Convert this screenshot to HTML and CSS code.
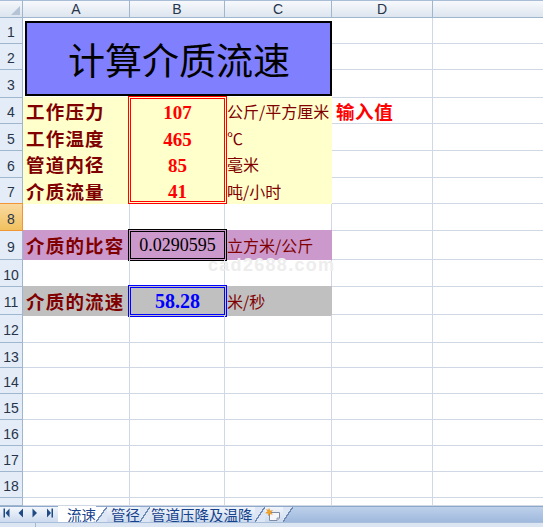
FILE: index.html
```html
<!DOCTYPE html>
<html lang="zh-CN">
<head>
<meta charset="utf-8">
<title>计算介质流速</title>
<link rel="stylesheet" href="styles.css">
</head>
<body>
<div class="app">
  <div class="sheet">
    <div class="corner"><svg width="9" height="9" viewBox="0 0 9 9"><polygon points="9,0 9,9 0,9" fill="#B4C3D6"/></svg></div>
    <div class="ch">A</div><div class="ch">B</div><div class="ch">C</div><div class="ch">D</div><div class="ch e"></div>

    <div class="rh">1</div>
    <div class="title">计算介质流速</div>
    <div class="c"></div><div class="c e"></div>
    <div class="rh">2</div><div class="c"></div><div class="c e"></div>
    <div class="rh">3</div><div class="c"></div><div class="c e"></div>

    <div class="rh">4</div>
    <div class="inputs">
      <div class="lbl">工作压力</div>
      <div class="ibox">
        <span class="iv">107</span>
        <span class="iv">465</span>
        <span class="iv">85</span>
        <span class="iv">41</span>
      </div>
      <div class="unit">公斤/平方厘米</div>
      <div class="lbl">工作温度</div>
      <div class="unit">℃</div>
      <div class="lbl">管道内径</div>
      <div class="unit">毫米</div>
      <div class="lbl">介质流量</div>
      <div class="unit">吨/小时</div>
    </div>
    <div class="c note">输入值</div><div class="c e"></div>
    <div class="rh">5</div><div class="c"></div><div class="c e"></div>
    <div class="rh">6</div><div class="c"></div><div class="c e"></div>
    <div class="rh">7</div><div class="c"></div><div class="c e"></div>

    <div class="rh sel">8</div><div class="c"></div><div class="c"></div><div class="c"></div><div class="c"></div><div class="c e"></div>

    <div class="rh">9</div>
    <div class="band band-vol">
      <div class="lbl">介质的比容</div>
      <div class="obox obox-black">0.0290595</div>
      <div class="unit">立方米/公斤</div>
    </div>
    <div class="c"></div><div class="c e"></div>

    <div class="rh">10</div><div class="c"></div><div class="c"></div><div class="c"></div><div class="c"></div><div class="c e"></div>

    <div class="rh">11</div>
    <div class="band band-speed">
      <div class="lbl">介质的流速</div>
      <div class="obox obox-blue">58.28</div>
      <div class="unit">米/秒</div>
    </div>
    <div class="c"></div><div class="c e"></div>

    <div class="rh">12</div><div class="c"></div><div class="c"></div><div class="c"></div><div class="c"></div><div class="c e"></div>
    <div class="rh">13</div><div class="c"></div><div class="c"></div><div class="c"></div><div class="c"></div><div class="c e"></div>
    <div class="rh">14</div><div class="c"></div><div class="c"></div><div class="c"></div><div class="c"></div><div class="c e"></div>
    <div class="rh">15</div><div class="c"></div><div class="c"></div><div class="c"></div><div class="c"></div><div class="c e"></div>
    <div class="rh">16</div><div class="c"></div><div class="c"></div><div class="c"></div><div class="c"></div><div class="c e"></div>
    <div class="rh">17</div><div class="c"></div><div class="c"></div><div class="c"></div><div class="c"></div><div class="c e"></div>
    <div class="rh">18</div><div class="c"></div><div class="c"></div><div class="c"></div><div class="c"></div><div class="c e"></div>
    <div class="rh"></div><div class="c"></div><div class="c"></div><div class="c"></div><div class="c"></div><div class="c e"></div>

    <div class="watermark">cad2688.com</div>
  </div>

  <div class="tabbar">
    <div class="nav">
      <svg width="58" height="16" viewBox="0 0 58 16">
        <rect x="3.5" y="2.5" width="1.5" height="9" fill="#1F4A86"/>
        <polygon points="5.5,7 9.5,2.5 9.5,11.5" fill="#1F4A86"/>
        <polygon points="18.5,7 23,2.5 23,11.5" fill="#1F4A86"/>
        <polygon points="37,7 32.5,2.5 32.5,11.5" fill="#1F4A86"/>
        <polygon points="51,7 47,2.5 47,11.5" fill="#1F4A86"/>
        <rect x="51.5" y="2.5" width="1.5" height="9" fill="#1F4A86"/>
      </svg>
    </div>
    <div class="tab tab-active">流速</div>
    <div class="sep sep-aw"></div>
    <div class="tab tab-2">管径</div>
    <div class="sep sep-ww"></div>
    <div class="tab tab-3">管道压降及温降</div>
    <div class="sep sep-ww"></div>
    <div class="tab tab-new">
      <svg width="17" height="14" viewBox="0 0 17 14">
        <path d="M4.5 4.5 H14.5 V10 L12 12.5 H4.5 Z" fill="#F4F6F9" stroke="#7D8CA3" stroke-width="1"/>
        <path d="M12 12.5 V10 H14.5" fill="#D5DBE4" stroke="#7D8CA3" stroke-width="0.8"/>
        <polygon points="4,0.5 5,3 7.5,2.5 5.8,4.3 7.3,6.5 4.8,5.6 3.5,7.8 3.2,5.3 0.6,5 2.8,3.6 1.5,1.3 3.6,2.6" fill="#F5A623" stroke="#E07B00" stroke-width="0.4"/>
      </svg>
    </div>
    <div class="sep sep-wf"></div>
    <div class="filler"></div>
  </div>
  <div class="status"><div class="status-seg"></div><div class="status-rest"></div></div>
</div>
</body>
</html>
```
FILE: styles.css
```css
* { box-sizing: border-box; }
html, body { margin: 0; padding: 0; }
body {
  width: 543px;
  height: 527px;
  overflow: hidden;
  background: #fff;
  font-family: "Liberation Sans", Arial, sans-serif;
}
.app {
  display: flex;
  flex-direction: column;
  width: 543px;
  height: 527px;
}
.sheet {
  position: relative;
  display: grid;
  grid-template-columns: 23px 107px 95px 107px 101px 1fr;
  grid-template-rows: 18px 26px 26px 28px 26px 27px 27px 26px 27px 29px 27px 28px 28px 25px 26px 26px 26px 26px 26px 8px;
  height: 506px;
  flex: none;
  overflow: hidden;
  background: #fff;
}
.corner {
  background: linear-gradient(#A9BED6 0 1px, #F4F7FB 1px, #DCE4EE);
  border-right: 1px solid #9EB6CE;
  border-bottom: 1px solid #9EB6CE;
  display: flex;
  justify-content: flex-end;
  align-items: flex-end;
  padding: 0 2px 2px 0;
}
.corner svg { display: block; }
.ch {
  background: linear-gradient(#A9BED6 0 1px, #F7F9FC 1px, #DDE5EF);
  border-right: 1px solid #9EB6CE;
  border-bottom: 1px solid #9EB6CE;
  display: flex;
  align-items: center;
  justify-content: center;
  font-size: 14px;
  line-height: 16px;
  color: #27354A;
  padding-top: 1px;
}
.ch.e { border-right: none; }
.rh {
  background: #E4ECF7;
  border-right: 1px solid #9EB6CE;
  border-bottom: 1px solid #9EB6CE;
  display: flex;
  align-items: center;
  justify-content: center;
  font-size: 14px;
  line-height: 16px;
  color: #27354A;
  padding-top: 3px;
  overflow: hidden;
}
.rh.sel {
  background: linear-gradient(#F9D99F, #F1C15F);
  border-top: 1px solid #F29536;
  border-bottom: 1px solid #F29536;
  border-right: 1px solid #F29536;
  margin-top: -1px;
}
.c {
  border-right: 1px solid #D0D7E5;
  border-bottom: 1px solid #D0D7E5;
}
.c.e { border-right: none; }

.title {
  grid-column: span 3;
  grid-row: span 3;
  margin: 3px 0 2px 2px;
  background: #8080FF;
  border: 2px solid #000;
  display: flex;
  align-items: center;
  justify-content: center;
  font-family: "Noto Sans CJK SC", sans-serif;
  font-size: 37px;
  color: #000;
  line-height: 44px;
  padding-left: 1px;
}

.inputs {
  grid-column: span 3;
  grid-row: span 4;
  margin-top: -1px;
  background: #FFFFCC;
  display: grid;
  grid-template-columns: 107px 95px 107px;
  grid-template-rows: 28px 26px 26px 27px;
}
.lbl {
  grid-column: 1;
  display: flex;
  align-items: center;
  padding-left: 3px;
  font-family: "Noto Sans CJK SC", sans-serif;
  font-weight: 700;
  font-size: 18.5px;
  letter-spacing: 1.2px;
  line-height: 20px;
  color: #800000;
  white-space: nowrap;
}
.unit {
  grid-column: 3;
  display: flex;
  align-items: center;
  padding-left: 2px;
  font-family: "Noto Sans CJK SC", sans-serif;
  font-size: 16px;
  line-height: 18px;
  color: #800000;
  white-space: nowrap;
}
.ibox {
  grid-column: 2;
  grid-row: 1 / span 4;
  margin: -1px -2px 0 -2px;
  border: 3px double #FF0000;
  display: grid;
  grid-template-rows: 27px 26px 26px 26px;
}
.iv {
  display: flex;
  align-items: center;
  justify-content: center;
  font-family: "Liberation Serif", "Times New Roman", serif;
  font-weight: 700;
  font-size: 19px;
  line-height: 21px;
  color: #FF0000;
}
.note {
  display: flex;
  align-items: center;
  padding-left: 4px;
  padding-top: 1px;
  font-family: "Noto Sans CJK SC", sans-serif;
  font-weight: 700;
  font-size: 18.5px;
  letter-spacing: 0.6px;
  line-height: 20px;
  color: #FF0000;
  white-space: nowrap;
}

.band {
  grid-column: span 3;
  margin-top: -1px;
  display: grid;
  grid-template-columns: 107px 95px 107px;
}
.band-vol { background: #CC99CC; }
.band-speed { background: #C0C0C0; margin-bottom: -1px; }
.obox {
  display: flex;
  align-items: center;
  justify-content: center;
  font-family: "Liberation Serif", "Times New Roman", serif;
  border-width: 3px;
  border-style: double;
  line-height: 22px;
}
.obox-black {
  margin: -1px -2px -1px -2px;
  border-color: #000;
  font-size: 18px;
  color: #000;
}
.obox-blue {
  margin: -1px -2px -1px -2px;
  border-color: #0000FF;
  font-size: 20px;
  font-weight: 700;
  color: #0000FF;
}

.watermark {
  position: absolute;
  left: 208px;
  top: 256px;
  font-family: "Liberation Sans", Arial, sans-serif;
  font-weight: 700;
  font-size: 18px;
  line-height: 19px;
  letter-spacing: 1.3px;
  color: #EDEDED;
  pointer-events: none;
}

.tabbar {
  display: flex;
  height: 16px;
  flex: none;
  background: linear-gradient(#BFD2EB, #9FB9DD);
  box-shadow: inset 0 1px 0 #8EA8CB;
}
.nav {
  width: 58px;
  flex: none;
  background: linear-gradient(#F3F7FC, #CCDAEE);
  border-top: 1px solid #8EA8CB;
}
.nav svg { display: block; margin-top: -1px; }
.tab {
  flex: none;
  display: flex;
  align-items: center;
  font-family: "Noto Sans CJK SC", sans-serif;
  font-size: 14.5px;
  line-height: 15px;
  color: #15428B;
  white-space: nowrap;
  background: linear-gradient(#F2F6FB, #CBD9ED);
  border-top: 1px solid #8EA8CB;
}
.tab-active {
  width: 38px;
  padding-left: 9px;
  background: #FFFFFF;
  border-top-color: #FFFFFF;
}
.tab-2 { width: 33px; padding-left: 4px; }
.tab-3 { width: 105px; padding-left: 1px; }
.tab-new { width: 18px; padding-left: 0; }
.tab-new svg { display: block; }
.sep {
  flex: none;
  width: 10px;
  border-top: 1px solid #8EA8CB;
}
.sep-aw {
  width: 11px;
  background: linear-gradient(to bottom right, #FFFFFF calc(50% - 0.8px), #6C8AB3 calc(50% - 0.8px), #6C8AB3 calc(50% + 0.6px), #DCE6F4 calc(50% + 0.6px));
}
.sep-ww {
  background: linear-gradient(to bottom right, #DCE6F4 calc(50% - 0.8px), #6C8AB3 calc(50% - 0.8px), #6C8AB3 calc(50% + 0.6px), #DCE6F4 calc(50% + 0.6px));
}
.sep-wf {
  background: linear-gradient(to bottom right, #DCE6F4 calc(50% - 0.8px), #6C8AB3 calc(50% - 0.8px), #6C8AB3 calc(50% + 0.6px), transparent calc(50% + 0.6px));
}
.filler { flex: 1; }
.status {
  display: flex;
  height: 5px;
  flex: none;
  background: #DCE6F3;
  border-top: 1px solid #A9BEDA;
}
.status-seg { width: 36px; border-right: 1px solid #A5B8D2; }
.status-rest { flex: 1; }
```
